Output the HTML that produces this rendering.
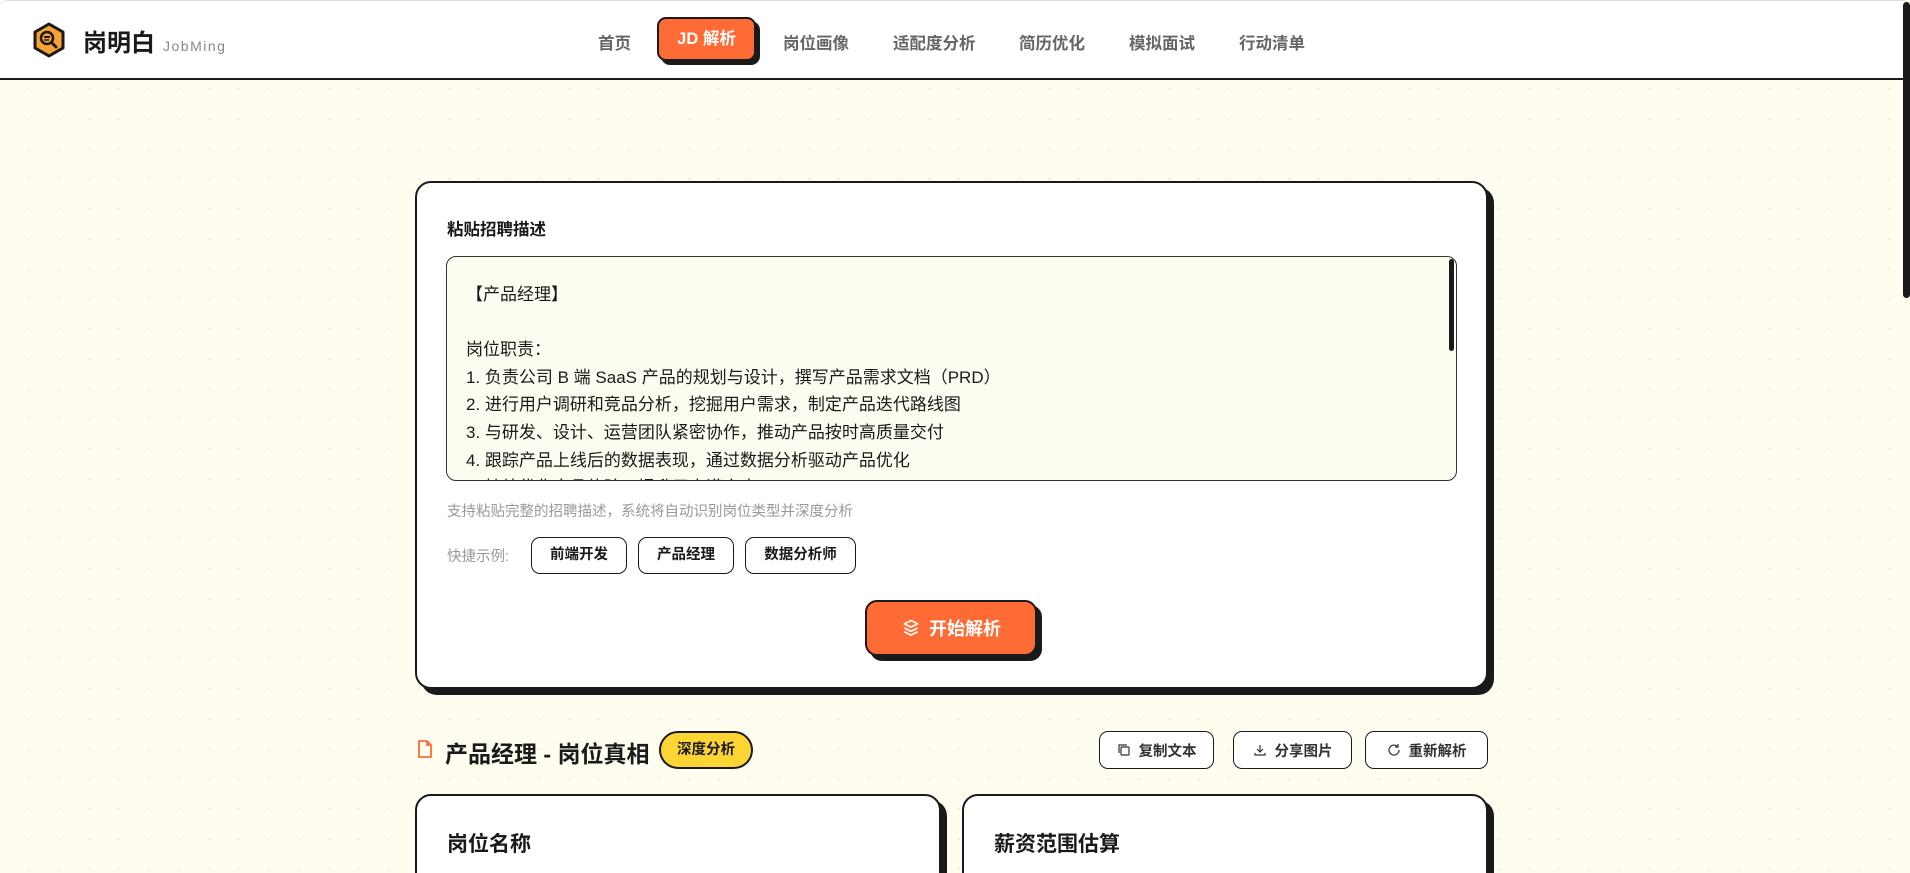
<!DOCTYPE html>
<html><head><meta charset="utf-8">
<style>
*{box-sizing:border-box;margin:0;padding:0}
html,body{width:1910px;height:873px;overflow:hidden}
body{font-family:"Liberation Sans","Noto Sans CJK SC",sans-serif;color:#1a1a1a;position:relative;
background-color:#fefdf0;background-image:radial-gradient(circle,#eeecdc 1px,transparent 1.3px);background-size:30px 30px;background-position:14px 14px}
.hdr{position:absolute;left:0;top:0;width:1910px;height:80px;background:#fff;border-bottom:2px solid #1a1a1a;border-top:1px solid #ddd;border-radius:8px 8px 0 0}
.logo{position:absolute;left:32px;top:21px}
.brand{position:absolute;left:83px;top:22px;font-size:24px;font-weight:bold}
.brand span{font-family:"Liberation Sans",sans-serif;font-size:14px;font-weight:normal;color:#888;margin-left:8px;letter-spacing:1.5px}
.nav{position:absolute;top:29px;font-size:16.5px;color:#666;font-weight:bold}
.jd{position:absolute;left:657px;top:16px;width:99px;height:44px;background:#ff6b35;border:2px solid #1a1a1a;border-radius:9px;box-shadow:4px 4px 0 #1a1a1a;color:#fff;font-weight:bold;font-size:16.5px;text-align:center;line-height:40px}
.sb{position:absolute;right:0;top:2px;width:7px;height:296px;background:#1a1a1a;border-radius:4px}
.card{position:absolute;background:#fff;border:2px solid #1a1a1a;border-radius:16px;box-shadow:6px 6px 0 #1a1a1a}
.lbl{position:absolute;left:447px;top:216px;font-size:16.5px;font-weight:bold}
.ta{position:absolute;left:446px;top:256px;width:1011px;height:225px;background:#fcfcf0;border:1px solid #333;border-radius:10px;overflow:hidden;padding:24px 0 0 19px;font-size:17px;line-height:27.6px;font-family:"Liberation Sans","Noto Sans CJK SC",sans-serif}
.ta .sbar{position:absolute;right:2px;top:2px;width:5px;height:92px;background:#1a1a1a;border-radius:3px}
.help{position:absolute;left:447px;top:500px;font-size:14.5px;color:#999}
.qk{position:absolute;left:447px;top:545px;font-size:14.5px;color:#999}
.chip{position:absolute;top:537px;height:37px;border:1.5px solid #1a1a1a;border-radius:9px;background:#fff;font-size:14.5px;font-weight:bold;text-align:center;line-height:34px}
.go{position:absolute;left:865px;top:600px;width:172px;height:56px;background:#ff6b35;border:2px solid #1a1a1a;border-radius:12px;box-shadow:5px 5px 0 #1a1a1a;color:#fff;font-size:18px;font-weight:bold;display:flex;align-items:center;justify-content:center;gap:8px}
.ttl{position:absolute;left:445px;top:735px;font-size:23px;font-weight:bold}
.badge{position:absolute;left:659px;top:731px;width:94px;height:38px;background:#fcd535;border:2px solid #1a1a1a;border-radius:19px;font-size:14.5px;font-weight:bold;text-align:center;line-height:34px}
.ab{position:absolute;top:731px;height:38px;border:1.5px solid #1a1a1a;border-radius:9px;background:#fff;font-size:14.5px;font-weight:bold;color:#333;display:flex;align-items:center;justify-content:center;gap:8px}
.ct{position:absolute;top:828px;font-size:21px;font-weight:bold}
</style></head><body>
<div class="hdr">
 <svg class="logo" width="34" height="36" viewBox="0 0 34 36"><polygon points="17,2 31,10 31,26 17,34 3,26 3,10" fill="#f7a234" stroke="#1a1a1a" stroke-width="3" stroke-linejoin="round"/><circle cx="15" cy="16" r="6" fill="none" stroke="#1a1a1a" stroke-width="2.5"/><line x1="12" y1="15" x2="18" y2="15" stroke="#1a1a1a" stroke-width="2"/><line x1="12" y1="18" x2="17" y2="18" stroke="#1a1a1a" stroke-width="1.5"/><line x1="19.5" y1="20.5" x2="24" y2="25" stroke="#1a1a1a" stroke-width="3" stroke-linecap="round"/></svg>
 <div class="brand">岗明白<span>JobMing</span></div>
 <div class="nav" style="left:598px">首页</div>
 <div class="jd">JD 解析</div>
 <div class="nav" style="left:783px">岗位画像</div>
 <div class="nav" style="left:893px">适配度分析</div>
 <div class="nav" style="left:1019px">简历优化</div>
 <div class="nav" style="left:1129px">模拟面试</div>
 <div class="nav" style="left:1239px">行动清单</div>
</div>
<div class="sb"></div>

<div class="card" style="left:415px;top:181px;width:1073px;height:508px"></div>
<div class="lbl">粘贴招聘描述</div>
<div class="ta"><div class="sbar"></div>【产品经理】<br><br>岗位职责：<br>1. 负责公司 B 端 SaaS 产品的规划与设计，撰写产品需求文档（PRD）<br>2. 进行用户调研和竞品分析，挖掘用户需求，制定产品迭代路线图<br>3. 与研发、设计、运营团队紧密协作，推动产品按时高质量交付<br>4. 跟踪产品上线后的数据表现，通过数据分析驱动产品优化<br>5. 持续优化产品体验，提升用户满意度</div>
<div class="help">支持粘贴完整的招聘描述，系统将自动识别岗位类型并深度分析</div>
<div class="qk">快捷示例:</div>
<div class="chip" style="left:531px;width:96px">前端开发</div>
<div class="chip" style="left:638px;width:96px">产品经理</div>
<div class="chip" style="left:745px;width:111px">数据分析师</div>
<div class="go"><svg width="20" height="20" viewBox="0 0 24 24" fill="none" stroke="#fff" stroke-width="2" stroke-linejoin="round"><path d="M12 3l8 4-8 4-8-4z"/><path d="M4 12l8 4 8-4"/><path d="M4 16.5l8 4 8-4"/></svg>开始解析</div>

<svg style="position:absolute;left:417px;top:739px" width="16" height="20" viewBox="0 0 16 20" fill="none" stroke="#ff6b35" stroke-width="1.8" stroke-linejoin="round"><path d="M2 2h8l4 4v12H2z"/><path d="M10 2v4h4"/></svg>
<div class="ttl">产品经理 - 岗位真相</div>
<div class="badge">深度分析</div>
<div class="ab" style="left:1099px;width:115px"><svg width="14" height="14" viewBox="0 0 14 14" fill="none" stroke="#333" stroke-width="1.2"><rect x="4" y="4" width="8" height="8" rx="1"/><path d="M2 10V2h8"/></svg>复制文本</div>
<div class="ab" style="left:1233px;width:119px"><svg width="14" height="14" viewBox="0 0 14 14" fill="none" stroke="#333" stroke-width="1.2"><path d="M7 2v7M4 6l3 3 3-3M2 10v2h10v-2"/></svg>分享图片</div>
<div class="ab" style="left:1365px;width:123px"><svg width="14" height="14" viewBox="0 0 14 14" fill="none" stroke="#333" stroke-width="1.2"><path d="M12 7a5 5 0 1 1-1.5-3.5M11 1v3h-3"/></svg>重新解析</div>

<div class="card" style="left:415px;top:794px;width:526px;height:120px"></div>
<div class="card" style="left:962px;top:794px;width:526px;height:120px"></div>
<div class="ct" style="left:447px">岗位名称</div>
<div class="ct" style="left:994px">薪资范围估算</div>
</body></html>
